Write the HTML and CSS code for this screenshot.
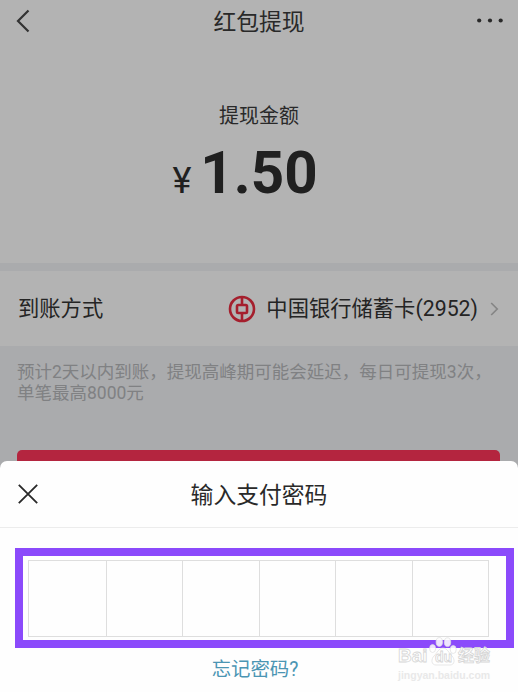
FILE: index.html
```html
<!DOCTYPE html>
<html lang="zh-CN">
<head>
<meta charset="utf-8">
<title>红包提现</title>
<link rel="stylesheet" href="styles.css">
</head>
<body>
<div class="screen">
  <section class="top">
    <header class="bar">
      <svg class="back" width="14" height="24" viewBox="0 0 14 24"><path d="M12.5 1.5 2 12 12.5 22.5"/></svg>
      <h1 class="title">红包提现</h1>
      <svg class="more" width="28" height="6" viewBox="0 0 28 6"><circle cx="3.2" cy="2.5" r="2.1"/><circle cx="14" cy="2.5" r="2.1"/><circle cx="24.7" cy="2.5" r="2.1"/></svg>
    </header>
    <div class="label">提现金额</div>
    <div class="amount"><span class="yen">¥</span><span class="num">1.50</span></div>
  </section>
  <section class="method">
    <span class="method-name">到账方式</span>
    <svg class="bank" width="28" height="28" viewBox="0 0 28 28"><circle cx="14" cy="14" r="12"/><rect x="9" y="10" width="10" height="8" rx="1.2"/><path d="M14 2v8M14 18v8"/></svg>
    <span class="card">中国银行储蓄卡(2952)</span>
    <svg class="next" width="9" height="14" viewBox="0 0 9 14"><path d="M1.2 1 7.2 7 1.2 13"/></svg>
  </section>
  <p class="notice">预计2天以内到账，提现高峰期可能会延迟，每日可提现3次，<br>单笔最高8000元</p>
  <div class="submit"></div>
  <section class="sheet">
    <header class="sheet-head">
      <svg class="close" width="20" height="20" viewBox="0 0 20 20"><path d="M.8.8 19.2 19.2M19.2.8.8 19.2"/></svg>
      <h2 class="title">输入支付密码</h2>
    </header>
    <div class="frame">
      <div class="cells"><i></i><i></i><i></i><i></i><i></i><i></i></div>
    </div>
    <a class="forgot">忘记密码?</a>
    <div class="watermark">
      <div class="brand"><span class="bai">Bai</span><span class="paw"><svg width="28" height="30" viewBox="0 0 28 30"><ellipse cx="3.6" cy="11.5" rx="3" ry="4"/><ellipse cx="10.3" cy="5" rx="3.2" ry="4.4"/><ellipse cx="18.5" cy="5.2" rx="3.2" ry="4.4"/><ellipse cx="24.2" cy="12.5" rx="3" ry="4"/><path class="pad" d="M14 11c4 0 6 5 9 8s3 9-2 9H7c-5 0-5-6-2-9s5-8 9-8z"/></svg><b>du</b></span><span class="cn">经验</span></div>
      <div class="site">jingyan.baidu.com</div>
    </div>
  </section>
</div>
</body>
</html>
```
FILE: styles.css
```css
* { box-sizing: border-box; }
body {
  margin: 0;
  font-family: Roboto, "Noto Sans CJK SC", sans-serif;
  color: #292929;
  background: #aaabad;
}
svg { display: block; fill: none; flex: none; }
.screen {
  width: 518px;
  height: 692px;
  overflow: hidden;
  display: flex;
  flex-direction: column;
  background: #aaabad;
}
.top { height: 263px; background: #b3b3b3; }
.bar {
  height: 41px;
  padding: 0 14px 0 16px;
  display: grid;
  grid-template-columns: 31px 1fr 33px;
  align-items: center;
}
.title {
  margin: 0;
  padding-top: 4px;
  font-size: 22.8px;
  line-height: 34px;
  font-weight: 400;
  text-align: center;
}
.back { stroke: #333; stroke-width: 2.2; }
.more { fill: #292929; justify-self: end; }
.label {
  margin-top: 60px;
  font-size: 20px;
  line-height: 30px;
  text-align: center;
}
.amount {
  display: flex;
  justify-content: center;
  align-items: baseline;
  gap: 9px;
  margin-top: 7px;
  padding-right: 28px;
  line-height: 70px;
  color: #202020;
}
.yen { font-size: 36px; }
.num { font-size: 58.3px; font-weight: 700; }
.method {
  height: 75px;
  margin-top: 8px;
  padding: 0 19px 0 18px;
  display: flex;
  align-items: center;
  background: #b3b3b3;
  font-size: 21.3px;
  line-height: 32px;
  color: #242424;
}
.method-name { flex: 1; padding-top: 1px; }
.card { padding-top: 1px; }
.bank { margin-right: 10px; stroke: #a51f2d; stroke-width: 2.6; }
.next { margin-left: 12px; stroke: #858585; stroke-width: 1.7; }
.notice {
  height: 104px;
  margin: 0;
  padding: 16px 0 0 17px;
  font-size: 17.5px;
  line-height: 20.5px;
  white-space: nowrap;
  color: #808183;
}
.submit {
  height: 10.5px;
  margin: 0 18px 0 17px;
  flex: none;
  border-radius: 5px 5px 0 0;
  background: #b4253f;
}
.sheet {
  position: relative;
  flex: 1;
  border-radius: 7px 7px 0 0;
  background: #fefefe;
}
.sheet-head {
  height: 67px;
  padding: 0 18px;
  display: grid;
  grid-template-columns: 32px 1fr 32px;
  align-items: center;
  border-bottom: 1px solid #ececec;
}
.close { stroke: #292929; stroke-width: 1.8; }
.frame {
  height: 100px;
  margin: 20px 4px 0 15px;
  padding: 4px 17px 3px 5px;
  border: 8px solid #8b4afb;
}
.cells {
  height: 77px;
  display: grid;
  grid-template-columns: repeat(6, 1fr);
  border: 1px solid #dedede;
}
.cells i + i { border-left: 1px solid #dedede; }
.forgot {
  display: block;
  margin: 8px 8px 0 0;
  font-size: 19.4px;
  line-height: 28px;
  text-align: center;
  color: #4b95b3;
}
.watermark {
  position: absolute;
  left: 398px;
  top: 175px;
  width: 96px;
  color: #fff;
}
.brand {
  display: flex;
  align-items: flex-end;
  height: 31px;
  font: 700 19px/22px "Liberation Sans", "Noto Sans CJK SC", sans-serif;
  -webkit-text-stroke: .8px #d6d6d6;
}
.bai { width: 31px; }
.paw { position: relative; margin-right: 1px; }
.paw svg { fill: rgba(255, 255, 255, .85); stroke: #dedede; stroke-width: .7; }
.paw b {
  position: absolute;
  left: 6px;
  bottom: 1px;
  font-size: 14px;
  line-height: 18px;
}
.cn { font-size: 16px; }
.site {
  padding-top: 1px;
  font: 700 10.5px/14px "Liberation Sans", sans-serif;
  color: #e9e9e9;
}
```
